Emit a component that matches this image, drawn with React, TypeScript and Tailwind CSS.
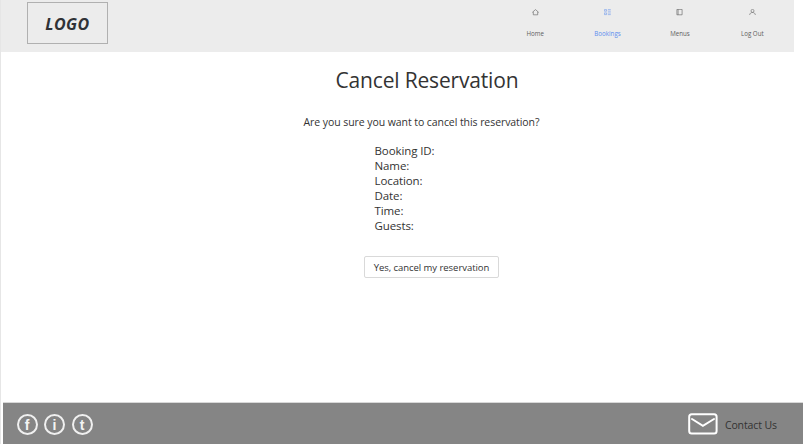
import type { ReactNode } from "react";

const details = ["Booking ID:", "Name:", "Location:", "Date:", "Time:", "Guests:"];

function HomeIcon() {
  return (
    <svg className="block h-[7px] w-[7px]" viewBox="0 0 7 7" fill="none" stroke="currentColor" strokeWidth="0.6">
      <path d="M0.3 3.4 3.5 0.6 6.7 3.4M1.3 2.8V5.8H5.7V2.8" />
    </svg>
  );
}

function BookingsIcon() {
  return (
    <svg className="block h-[7px] w-[7px]" viewBox="0 0 7 7" fill="none" stroke="currentColor" strokeWidth="0.5">
      <path d="M0.4 0.6H2.6V2.2H0.4ZM0.4 3.9H2.6V5.6H0.4ZM3.9 0.6H6.8M3.9 2.2H6.8M3.9 4H6.8M3.9 5.6H6.8" />
    </svg>
  );
}

function MenusIcon() {
  return (
    <svg className="block h-[7px] w-[7px]" viewBox="0 0 7 7" fill="none" stroke="currentColor" strokeWidth="0.6">
      <path d="M0.9 0.4H6.1V5.8H0.9ZM2.1 0.4V5.8" />
    </svg>
  );
}

function UserIcon() {
  return (
    <svg className="block h-[7px] w-[7px]" viewBox="0 0 7 7" fill="none" stroke="currentColor" strokeWidth="0.55">
      <circle cx="3.5" cy="1.9" r="1.5" />
      <path d="M0.6 6C0.8 4.3 2 3.5 3.5 3.5S6.2 4.3 6.4 6" />
    </svg>
  );
}

function NavItem({ icon, label, active }: { icon: ReactNode; label: string; active?: boolean }) {
  return (
    <a className={`flex w-[72.4px] flex-col items-center ${active ? "text-[#5b8def]" : "text-[#5c5c5c]"}`}>
      {icon}
      <span className="mt-[14px] text-[6.2px] leading-[8px] whitespace-nowrap">{label}</span>
    </a>
  );
}

function Social({ letter }: { letter: string }) {
  return (
    <a className="flex h-[21px] w-[21px] items-center justify-center rounded-full border-2 border-[#f0f0f0] font-['Liberation_Sans',sans-serif] text-[14px] leading-none font-bold text-[#f4f4f4]">
      {letter}
    </a>
  );
}

export default function App() {
  return (
    <div className="flex h-[444px] w-[803px] flex-col overflow-hidden border-l border-[#e6e6e6] bg-white font-['Open_Sans','Noto_Sans',sans-serif] text-[#333]">
      <header className="flex h-[52px] w-[793px] shrink-0 items-start justify-between bg-[#ececec] pt-[2px] pr-[5.5px] pl-[26px]">
        <div className="flex h-[42px] w-[81px] items-center justify-center border border-[#b0b0b0] pt-px text-[16px] font-bold tracking-[0.4px] text-[#2f3236] italic">
          LOGO
        </div>
        <nav className="flex pt-[7px]">
          <NavItem icon={<HomeIcon />} label="Home" />
          <NavItem icon={<BookingsIcon />} label="Bookings" active />
          <NavItem icon={<MenusIcon />} label="Menus" />
          <NavItem icon={<UserIcon />} label="Log Out" />
        </nav>
      </header>

      <main className="flex flex-1 flex-col items-start">
        <h1 className="mt-[13px] ml-[334.5px] text-[21px] leading-[30px] tracking-[-0.17px] whitespace-nowrap">Cancel Reservation</h1>
        <p className="mt-[19px] ml-[302.5px] text-[10.5px] leading-[16px] tracking-[-0.07px] whitespace-nowrap">
          Are you sure you want to cancel this reservation?
        </p>
        <ul className="mt-[13px] ml-[373.5px] text-[11.5px] leading-[15px] tracking-[-0.1px] whitespace-nowrap">
          {details.map((label) => (
            <li key={label}>{label}</li>
          ))}
        </ul>
        <button className="mt-[23px] ml-[363px] flex h-[22px] w-[135px] items-center justify-center rounded-[2px] border border-[#d9d9d9] bg-white pt-[2px] text-[9.5px] tracking-[-0.05px] whitespace-nowrap">
          Yes, cancel my reservation
        </button>
      </main>

      <footer className="ml-[2px] flex h-[42px] shrink-0 items-center justify-between border-t border-[#d8d8d8] bg-[#858585] pr-[26px] pl-[13.5px]">
        <div className="flex gap-[6.5px] pt-[2px]">
          <Social letter="f" />
          <Social letter="i" />
          <Social letter="t" />
        </div>
        <div className="flex items-center gap-[7px]">
          <svg className="block h-[22px] w-[30px]" viewBox="0 0 30 22" fill="none" stroke="#fff" strokeWidth="2">
            <rect x="1.2" y="1.2" width="27.4" height="19.4" rx="2.5" />
            <path d="M4 6 14.9 12.8 26 6" strokeLinecap="round" />
          </svg>
          <span className="pt-[3px] text-[10.5px] leading-[14px] tracking-[-0.1px] whitespace-nowrap">Contact Us</span>
        </div>
      </footer>
    </div>
  );
}
